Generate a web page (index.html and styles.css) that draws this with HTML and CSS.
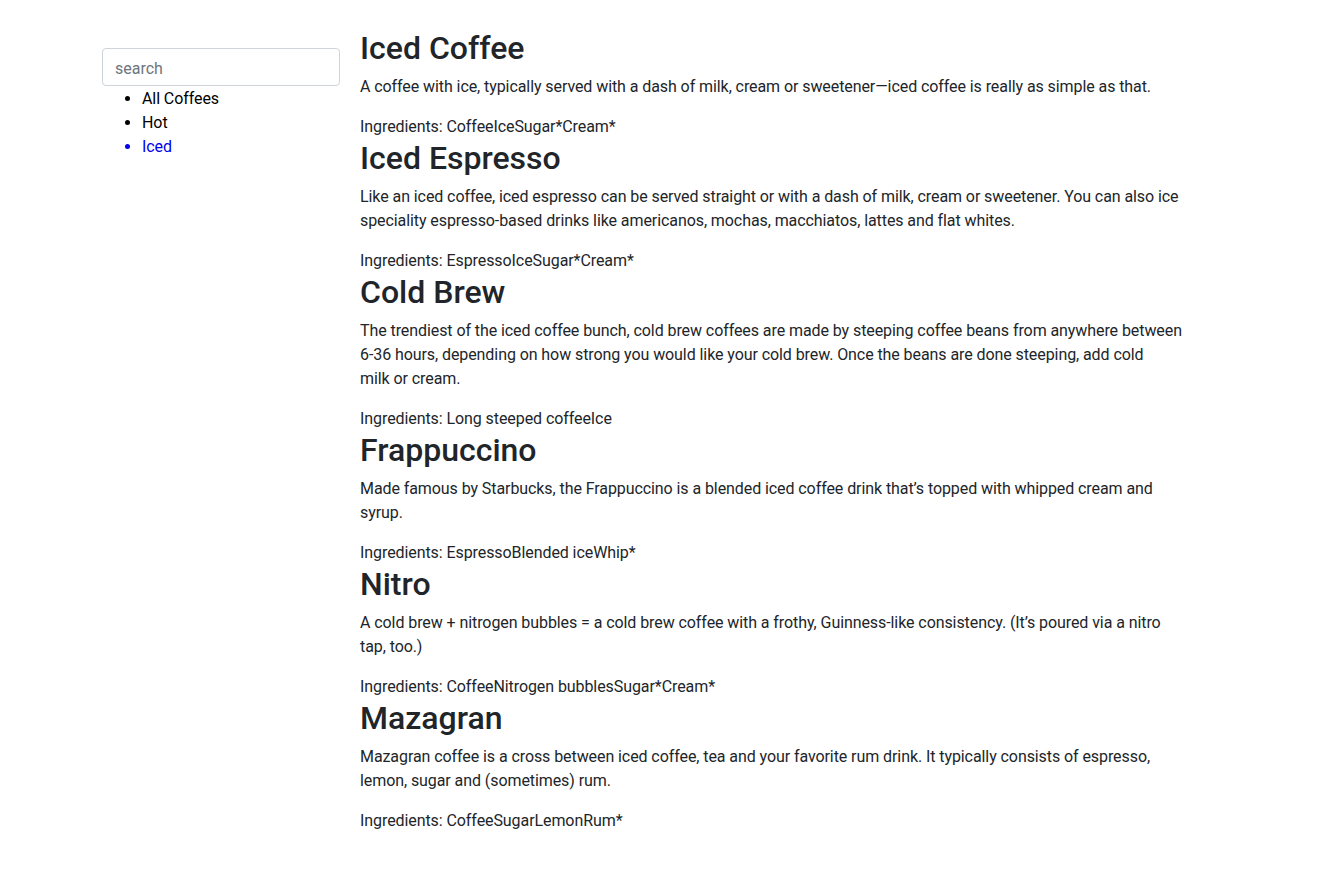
FILE: index.html
```html
<!DOCTYPE html>
<html lang="en">
<head>
<meta charset="utf-8">
<title>Coffees</title>
<link rel="stylesheet" href="styles.css">
</head>
<body>
<div class="page">
  <aside class="sidebar">
    <input class="search" type="text" placeholder="search">
    <ul class="filters">
      <li class="filter">All Coffees</li>
      <li class="filter">Hot</li>
      <li class="filter active">Iced</li>
    </ul>
  </aside>
  <main class="content">
    <section class="coffee">
      <h2 class="title">Iced Coffee</h2>
      <p class="desc">A coffee with ice, typically served with a dash of milk, cream or sweetener—iced coffee is really as simple as that.</p>
      <div class="ingredients">Ingredients: <span>Coffee</span><span>Ice</span><span>Sugar*</span><span>Cream*</span></div>
    </section>
    <section class="coffee">
      <h2 class="title">Iced Espresso</h2>
      <p class="desc">Like an iced coffee, iced espresso can be served straight or with a dash of milk, cream or sweetener. You can also ice speciality espresso-based drinks like americanos, mochas, macchiatos, lattes and flat whites.</p>
      <div class="ingredients">Ingredients: <span>Espresso</span><span>Ice</span><span>Sugar*</span><span>Cream*</span></div>
    </section>
    <section class="coffee">
      <h2 class="title">Cold Brew</h2>
      <p class="desc">The trendiest of the iced coffee bunch, cold brew coffees are made by steeping coffee beans from anywhere between 6-36 hours, depending on how strong you would like your cold brew. Once the beans are done steeping, add cold<br>milk or cream.</p>
      <div class="ingredients">Ingredients: <span>Long steeped coffee</span><span>Ice</span></div>
    </section>
    <section class="coffee">
      <h2 class="title">Frappuccino</h2>
      <p class="desc">Made famous by Starbucks, the Frappuccino is a blended iced coffee drink that’s topped with whipped cream and syrup.</p>
      <div class="ingredients">Ingredients: <span>Espresso</span><span>Blended ice</span><span>Whip*</span></div>
    </section>
    <section class="coffee">
      <h2 class="title">Nitro</h2>
      <p class="desc">A cold brew + nitrogen bubbles = a cold brew coffee with a frothy, Guinness-like consistency. (It’s poured via a nitro tap, too.)</p>
      <div class="ingredients">Ingredients: <span>Coffee</span><span>Nitrogen bubbles</span><span>Sugar*</span><span>Cream*</span></div>
    </section>
    <section class="coffee">
      <h2 class="title">Mazagran</h2>
      <p class="desc">Mazagran coffee is a cross between iced coffee, tea and your favorite rum drink. It typically consists of espresso, lemon, sugar and (sometimes) rum.</p>
      <div class="ingredients">Ingredients: <span>Coffee</span><span>Sugar</span><span>Lemon</span><span>Rum*</span></div>
    </section>
  </main>
</div>
</body>
</html>
```
FILE: styles.css
```css
* { box-sizing: border-box; }
html, body {
  margin: 0;
  padding: 0;
  background: #fff;
}
body {
  font-family: "Segoe UI", Roboto, "Liberation Sans", sans-serif;
  font-size: 16px;
  line-height: 24px;
  color: #212529;
  letter-spacing: -0.08px;
}
.page {
  display: flex;
  gap: 20px;
  padding: 29px 0 0 102px;
}
.sidebar {
  width: 238px;
  flex: none;
  padding-top: 19px;
}
.search {
  display: block;
  width: 100%;
  height: 38px;
  padding: 7px 12px 5px;
  font: inherit;
  color: #212529;
  border: 1px solid #ced4da;
  border-radius: 4px;
  background: #fff;
  outline: none;
}
.search::placeholder { color: #6c757d; }
.filters {
  margin: 0;
  padding: 1px 0 0 40px;
  list-style: disc;
}
.filter { color: #000; }
.filter.active { color: #0000ee; }
.content {
  width: 826px;
  flex: none;
}
.title {
  margin: 0 0 8px;
  font-size: 32px;
  font-weight: 500;
  line-height: 38px;
  letter-spacing: 0;
}
.desc {
  margin: 0 0 16px;
}
.ingredients { margin: 0; }
```
